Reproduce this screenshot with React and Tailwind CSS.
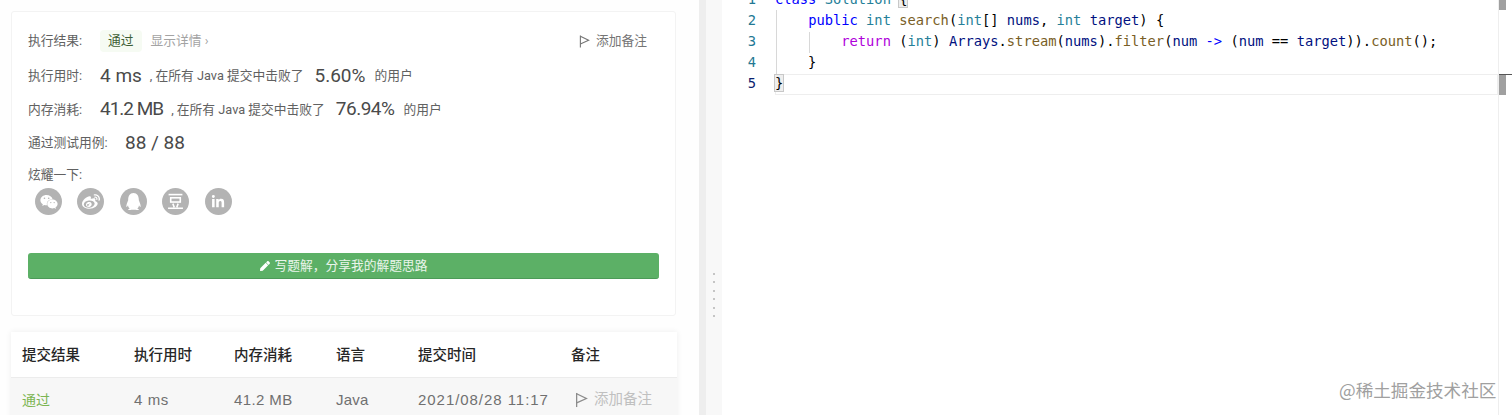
import React from 'react';
import { FaWeixin, FaWeibo, FaQq, FaLinkedinIn, FaPen } from 'react-icons/fa';

const FlagIcon = ({ className }) => (
  <svg viewBox="0 0 12 14" className={className} fill="none" stroke="currentColor" strokeWidth="1.2">
    <path d="M1.5 0.5V13.5" />
    <path d="M1.5 1.2L10.5 5.6L1.5 9.6" />
  </svg>
);

const DoubanIcon = () => (
  <svg viewBox="0 0 16 16" className="w-[17px] h-[17px]" fill="none" stroke="white" strokeWidth="1.5">
    <path d="M1.5 1.5H14.5" />
    <rect x="3.5" y="4.5" width="9" height="4" />
    <path d="M5.5 10L6.8 13.5M10.5 10L9.2 13.5M1 14.3H15" />
  </svg>
);

const shareIcons = [
  <FaWeixin key="wx" className="text-white text-[18px]" />,
  <FaWeibo key="wb" className="text-white text-[18px]" />,
  <FaQq key="qq" className="text-white text-[17px]" />,
  <DoubanIcon key="db" />,
  <FaLinkedinIn key="in" className="text-white text-[14px]" />,
];

// each token: [text, color class]
const codeLines = [
  { num: 1, tokens: [['class', 'text-[#0000ff]'], [' Solution ', 'text-[#267f99]'], ['{', 'text-black bg-[#eeeeee] outline outline-1 outline-[#c8c8c8]']] },
  { num: 2, tokens: [['    '], ['public', 'text-[#0000ff]'], [' '], ['int', 'text-[#267f99]'], [' '], ['search', 'text-[#795e26]'], ['('], ['int', 'text-[#267f99]'], ['[] '], ['nums', 'text-[#001080]'], [', '], ['int', 'text-[#267f99]'], [' '], ['target', 'text-[#001080]'], [') {']] },
  { num: 3, tokens: [['        '], ['return', 'text-[#af00db]'], [' ('], ['int', 'text-[#267f99]'], [') '], ['Arrays', 'text-[#001080]'], ['.'], ['stream', 'text-[#795e26]'], ['('], ['nums', 'text-[#001080]'], [').'], ['filter', 'text-[#795e26]'], ['('], ['num', 'text-[#001080]'], [' '], ['->', 'text-[#0000ff]'], [' ('], ['num', 'text-[#001080]'], [' == '], ['target', 'text-[#001080]'], [')).'], ['count', 'text-[#795e26]'], ['();']] },
  { num: 4, tokens: [['    }']] },
  { num: 5, tokens: [['}', 'bg-[#eeeeee] outline outline-1 outline-[#c8c8c8]']], active: true },
];

const Metric = ({ label, value, percent, rowClass, valueClass, percentClass }) => (
  <div className={`flex items-center text-[12.75px] text-[#616161] ${rowClass}`}>
    <span className="w-[72px]">{label}</span>
    <span className={`text-[19px] text-[#4a4a4a] ${valueClass}`}>{value}</span>
    <span className="ml-[8px]">, 在所有 Java 提交中击败了</span>
    <span className={`ml-[11px] text-[19px] text-[#4a4a4a] ${percentClass}`}>{percent}</span>
    <span className="ml-[9px]">的用户</span>
  </div>
);

const tableCols = 'grid grid-cols-[112px_100px_102px_82px_153px_1fr] pl-[11px] items-center';

export default function App() {
  return (
    <div className="relative flex h-[415px] w-[1512px] overflow-hidden bg-white font-['Roboto','Noto_Sans_CJK_SC',sans-serif]">
      {/* Left panel */}
      <div className="w-[699px] shrink-0 pt-[11px] pl-[11px] bg-[#fefefe]">
        <div className="w-[665px] h-[305px] rounded-[3px] border border-[#f3f3f3] bg-white pl-[16px] pr-[16px] pt-[11px]">
          <div className="flex items-center h-[36px] text-[12.75px] text-[#616161]">
            <span className="w-[72px]">执行结果:</span>
            <span className="px-[8px] h-[22px] leading-[22px] rounded-[4px] bg-[#f6fbf3] text-[#3f5f35]">通过</span>
            <span className="ml-[9px] text-[#a3a3a3]">显示详情 ›</span>
            <span className="ml-auto mr-[12px] flex items-center gap-[6px] text-[#757575]">
              <FlagIcon className="w-[11px] h-[13px]" />
              添加备注
            </span>
          </div>
          <Metric label="执行用时:" value="4 ms" percent="5.60%" rowClass="h-[34px]" />
          <Metric label="内存消耗:" value="41.2 MB" percent="76.94%" rowClass="h-[33px]" valueClass="tracking-[-1px]" percentClass="tracking-[-0.5px]" />
          <div className="flex items-center h-[34px] text-[12.75px] text-[#616161]">
            <span className="w-[97px]">通过测试用例:</span>
            <span className="text-[19px] text-[#4a4a4a]">88 / 88</span>
          </div>
          <div className="mt-[7px] h-[16px] leading-[16px] text-[12.75px] text-[#616161]">炫耀一下:</div>
          <div className="flex gap-[15.4px] pl-[7px] mt-[5px]">
            {shareIcons.map((icon, i) => (
              <div key={i} className="flex h-[27px] w-[27px] items-center justify-center rounded-full bg-[#b3b3b3]">
                {icon}
              </div>
            ))}
          </div>
          <button className="mt-[38px] flex h-[26px] w-[631px] items-center justify-center gap-[5px] rounded-[3px] border-b border-[#4c9a58] bg-[#5cb066] text-[12.75px] text-[#eaf5eb]">
            <FaPen className="text-[10px] text-white" />
            写题解{'\uFF0C'}分享我的解题思路
          </button>
        </div>

        {/* Submissions table */}
        <div className="mt-[16px] w-[666px] bg-white shadow-[0_0_6px_rgba(0,0,0,0.07)]">
          <div className={`${tableCols} pt-[2px] h-[46px] text-[14.5px] font-medium text-[#262626] border-b border-[#ececec]`}>
            <span>提交结果</span>
            <span>执行用时</span>
            <span>内存消耗</span>
            <span>语言</span>
            <span>提交时间</span>
            <span>备注</span>
          </div>
          <div className={`${tableCols} h-[44px] font-['Liberation_Sans','Noto_Sans_CJK_SC',sans-serif] text-[15px] text-[#707070] bg-[#f7f7f7]`}>
            <span className="text-[14px] text-[#7cb552]">通过</span>
            <span className="tracking-[0.6px]">4 ms</span>
            <span className="tracking-[0.4px]">41.2 MB</span>
            <span className="tracking-[0.2px]">Java</span>
            <span className="tracking-[0.95px] whitespace-nowrap">2021/08/28 11:17</span>
            <span className="flex items-center gap-[6px] pl-[4px] text-[14.5px] text-[#c0c0c0] whitespace-nowrap">
              <FlagIcon className="w-[13px] h-[16px] text-[#8c8c8c]" />
              添加备注
            </span>
          </div>
        </div>
      </div>

      {/* Splitter */}
      <div className="w-[7px] shrink-0 bg-[#eeeeee]" />
      <div className="flex w-[16px] shrink-0 flex-col items-center justify-center gap-[6.4px] bg-[#f8f8f8] pt-[175px] pr-[1px]">
        {[0, 1, 2, 3, 4, 5].map((d) => (
          <span key={d} className="h-[2px] w-[2px] rounded-full bg-[#b5b5b5]" />
        ))}
      </div>

      {/* Editor */}
      <div className="flex-1 flex min-w-0">
        <div className="flex-1 -mt-[10px] font-['DejaVu_Sans_Mono',monospace] text-[13.75px] text-black">
          {codeLines.map((line) => (
            <div key={line.num} className="flex h-[21px] leading-[19px]">
              <span className={`w-[53px] shrink-0 pr-[19px] text-right ${line.active ? 'text-[#0b216f]' : 'text-[#237893]'}`}>
                {line.num}
              </span>
              <pre className={`flex-1 font-['DejaVu_Sans_Mono',monospace] ${line.active ? 'shadow-[inset_0_0_0_1px_#eeeeee] h-[21px]' : ''}`}>
                {line.tokens.map(([text, color], i) => (
                  <span key={i} className={color}>{text}</span>
                ))}
              </pre>
            </div>
          ))}
        </div>
        {/* Overview ruler */}
        <div className="relative w-[14px] shrink-0 border-l border-[#eeeeee]">
          <div className="absolute left-0 top-0 h-[10px] w-[7px] bg-[#a0a0a0]" />
          <div className="absolute left-0 top-[74px] h-px w-[13px] bg-[#555555]" />
          <div className="absolute left-0 top-[75px] h-[20px] w-[7px] bg-[#a0a0a0]" />
        </div>
      </div>

      {/* Indent guides */}
      <div className="absolute left-[776px] top-[10px] h-[64px] w-px bg-[#d8d8d8]" />
      <div className="absolute left-[809px] top-[32px] h-[21px] w-px bg-[#d8d8d8]" />

      {/* Watermark */}
      <div className="absolute left-[1339px] top-[379px] text-[17.6px] leading-[22px] text-[#a0a0a0] font-['Noto_Sans_CJK_SC',sans-serif] whitespace-nowrap">
        @稀土掘金技术社区
      </div>
    </div>
  );
}
